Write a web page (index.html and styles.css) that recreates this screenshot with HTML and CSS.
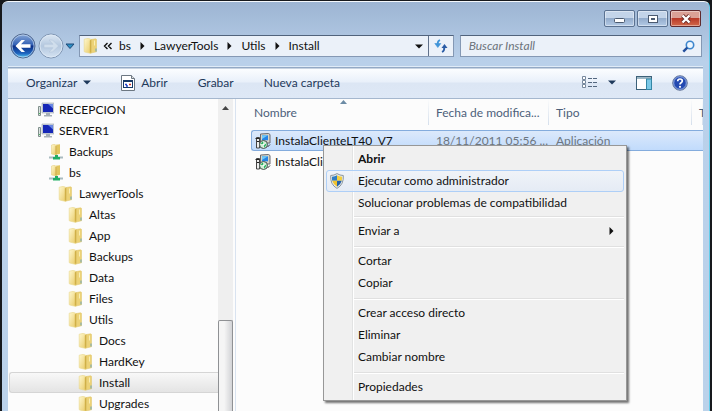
FILE: index.html
```html
<!doctype html>
<html lang="es">
  <head>
    <meta charset="utf-8">
    <meta name="viewport" content="width=device-width, initial-scale=1">
    <title>Install</title>
    <link rel="stylesheet" href="styles.css">
  </head>
  <body>
    <!-- Shared icons -->
    <svg class="defs" aria-hidden="true">
      <defs>
        <linearGradient id="gold" x1="0" x2="1" y1="0" y2="1">
          <stop offset="0" stop-color="#fff8cf"/>
          <stop offset="1" stop-color="#e8ca66"/>
        </linearGradient>
        <linearGradient id="orb" x1="0" x2="0" y1="0" y2="1">
          <stop offset="0" stop-color="#8aa9d8"/>
          <stop offset="0.45" stop-color="#3260b4"/>
          <stop offset="0.5" stop-color="#0c2f86"/>
          <stop offset="0.8" stop-color="#1d62bd"/>
          <stop offset="1" stop-color="#55d0f8"/>
        </linearGradient>
        <linearGradient id="orb-off" x1="0" x2="0" y1="0" y2="1">
          <stop offset="0" stop-color="#dce7f3"/>
          <stop offset="0.5" stop-color="#b4c8df"/>
          <stop offset="1" stop-color="#d5e3f2"/>
        </linearGradient>
        <symbol id="folder" viewBox="0 0 16 16">
          <path d="M8 1.500l4.500-.7q1 0 1 1v12l-5.500 1.200z" fill="#ecd277" stroke="#dfc364" stroke-width=".5"/>
          <path d="M1.200 1.200l4.300-.9 2.500 1.200v14l-6.300-1.500q-.5 0-.5-.8z" fill="url(#gold)" stroke="#ead68c" stroke-width=".6"/>
          <path d="M6.800 2.500l1.500-1v13.300l-1.500-.3z" fill="#d0b048"/>
          <path d="M11.500 2.500v5" stroke="#f9eeb4"/>
          <path d="M13 10.500v3" stroke="#6aa5bd"/>
        </symbol>
        <symbol id="share" viewBox="0 0 16 16">
          <path d="M8 .8l4-.5v9.500l-4 1z" fill="#e2c660"/>
          <path d="M3.500 1l2.500-.7 2.500 1v9.700l-5-1z" fill="url(#gold)" stroke="#e2ca78" stroke-width=".5"/>
          <path d="M8 2v8.500" stroke="#c9a53e"/>
          <path d="M1 13.500h14" stroke="#a9bbc0" stroke-width="2"/>
          <path d="M7 11h3v2h2v2.500H5V13h2z" fill="#21ad65"/>
        </symbol>
        <symbol id="computer" viewBox="0 0 16 16">
          <path d="M.5 4.500h2v9h-2z" fill="#dbe3e2" stroke="#81908c"/>
          <path d="M1 11.500h1" stroke="#4bb861"/>
          <path d="M4 1h12v10H4z" fill="#cfd5dc" stroke="#9ba5b2" stroke-width=".6"/>
          <path d="M5 2h10v8H5z" fill="#1627b7"/>
          <path d="M10 2h5v4.500z" fill="#6987e3"/>
          <path d="M8 11h4v2H8zM6 13h8v1.500H6z" fill="#a6afb7"/>
        </symbol>
        <symbol id="installer" viewBox="0 0 16 16">
          <path d="M5.500 1l8-.5 1.500 1v8.500H5.500z" fill="#d7d3c8" stroke="#686b72"/>
          <path d="M7 2.300h6v5H7z" fill="#2484e6"/>
          <path d="M7 2.300h6L7 6z" fill="#6fc8f7"/>
          <path d="M1.500 4.500h3v10.500h-3z" fill="#eee" stroke="#444"/>
          <path d="M.5 5.500h4M2 8.500h2" stroke="#222"/>
          <circle cx="8.500" cy="11.500" r="4" fill="#d3eed6" stroke="#444f4c"/>
          <path d="M5.500 10.500l2.500-2 .5 3zM8.500 12l3.500-1.500-2.500 4z" fill="#1fae58"/>
          <circle cx="8.500" cy="11.500" r="1" fill="#fff"/>
          <path d="M12.500 14l2.500-2.500" stroke="#333" fill="none"/>
        </symbol>
        <symbol id="arrow-right" viewBox="0 0 5 8">
          <path d="M.5 0L4.500 4l-4 4z" fill="currentColor"/>
        </symbol>
        <symbol id="arrow-down" viewBox="0 0 8 5">
          <path d="M0 .5h8L4 4.500z" fill="currentColor"/>
        </symbol>
      </defs>
    </svg>

    <div class="window">
      <header class="titlebar">
        <button class="win-btn" aria-label="Minimizar">
          <svg width="12" height="10"><rect x=".5" y="4.500" width="10" height="4" rx="1" fill="#fff" stroke="#4b5a70"/></svg>
        </button>
        <button class="win-btn" aria-label="Maximizar">
          <svg width="12" height="10"><rect x="1.500" y="1.500" width="9" height="7" fill="#fff" stroke="#4b5a70"/><rect x="4.500" y="4.500" width="3" height="1" fill="#8ca6c8" stroke="#4b5a70"/></svg>
        </button>
        <button class="win-btn close" aria-label="Cerrar">
          <svg width="12" height="10"><path d="M2.500 1.500l7 7M9.500 1.500l-7 7" stroke="#6b2a25" stroke-width="4"/><path d="M2.500 1.500l7 7M9.500 1.500l-7 7" stroke="#fff" stroke-width="2.400"/></svg>
        </button>
      </header>

      <div class="navbar">
        <div class="history">
          <button aria-label="Atrás">
            <svg width="26" height="26"><circle cx="13" cy="13" r="12" fill="url(#orb)" stroke="#53698e"/><circle cx="13" cy="13" r="11" fill="none" stroke="#c4d8f0" stroke-opacity=".7"/><path d="M5.500 13l6-6h3.500l-4 4.300h9.500v3.400H11l4 4.300h-3.500z" fill="#fff"/></svg>
          </button>
          <button aria-label="Adelante">
            <svg width="26" height="26"><circle cx="13" cy="13" r="12" fill="url(#orb-off)" stroke="#8096b3"/><circle cx="13" cy="13" r="11" fill="none" stroke="#dfeaf6" stroke-opacity=".8"/><path d="M20.500 13l-6-6H11l4 4.300H6v3.400h9L11 19h3.500z" fill="#d0deec" stroke="#b0c3d9" stroke-width=".5"/></svg>
          </button>
          <button class="recent" aria-label="Ubicaciones recientes">
            <svg width="10" height="7"><path d="M1 1h8L5 5.500z" fill="#2d8fc4" stroke="#1f4a78"/></svg>
          </button>
        </div>
        <nav class="address">
          <svg class="icon" width="16" height="16"><use href="#folder"/></svg>
          <button class="back-crumbs" aria-label="Niveles anteriores">
            <svg width="9" height="8"><path d="M4.500 1L1.500 4l3 3M8.500 1l-3 3 3 3" fill="none" stroke="#111" stroke-width="1.400"/></svg>
          </button>
          <a href="#">bs</a>
          <svg width="5" height="8"><use href="#arrow-right"/></svg>
          <a href="#">LawyerTools</a>
          <svg width="5" height="8"><use href="#arrow-right"/></svg>
          <a href="#">Utils</a>
          <svg width="5" height="8"><use href="#arrow-right"/></svg>
          <a href="#">Install</a>
          <button class="address-drop" aria-label="Ubicaciones anteriores">
            <svg width="8" height="5"><use href="#arrow-down"/></svg>
          </button>
          <button class="refresh" aria-label="Actualizar">
            <svg width="14" height="14"><path d="M.8 4.500h6L3.800 8.500z" fill="#3f94d8" stroke="#3f94d8" stroke-width=".6"/><path d="M6 1Q3.500 2 3.700 5" fill="none" stroke="#3f94d8" stroke-width="1.800"/><path d="M7.500 9h6l-3-4z" fill="#2a5ca6"/><path d="M10.300 8q.3 4-2.300 5" fill="none" stroke="#2a5ca6" stroke-width="1.800"/></svg>
          </button>
        </nav>
        <form class="search">
          <input type="text" placeholder="Buscar Install" aria-label="Buscar Install">
          <button type="button" aria-label="Buscar">
            <svg width="13" height="13"><circle cx="8" cy="5" r="3.700" fill="#eef7ff" stroke="#3d86cd" stroke-width="1.600"/><path d="M5.300 7.700L1.300 11.700" stroke="#234f9c" stroke-width="2.400"/></svg>
          </button>
        </form>
      </div>

      <div class="toolbar">
        <button>Organizar <svg width="8" height="5"><use href="#arrow-down"/></svg></button>
        <button>
          <svg width="14" height="16"><path d="M.5.5h10l3 3v12H.5z" fill="#fff" stroke="#6c7782"/><path d="M10.500.5v3h3" fill="#ddd" stroke="#6c7782"/><rect x="2.500" y="5.500" width="9" height="7" fill="#fff" stroke="#173a67"/><path d="M2 6h10" stroke="#173a67" stroke-width="2"/><path d="M4 9.500h2M5 11h2" stroke="#2949cc" stroke-width="1.500"/><path d="M8 9.500h2" stroke="#d13020" stroke-width="1.500"/></svg>
          Abrir
        </button>
        <button>Grabar</button>
        <button>Nueva carpeta</button>
        <div class="toolbar-right">
          <button class="views" aria-label="Cambiar la vista">
            <svg width="16" height="13"><path d="M.5.5h3v3h-3zM.5 4.500h3v3h-3zM.5 8.500h3v3h-3z" fill="#fff" stroke="#77889d"/><path d="M6 2.500h4M11 2.500h4M6 6.500h4M11 6.500h4M6 10.500h4M11 10.500h4" stroke="#53677f"/></svg>
            <svg width="8" height="5"><use href="#arrow-down"/></svg>
          </button>
          <button aria-label="Panel de vista previa">
            <svg width="16" height="14"><rect x=".5" y=".5" width="15" height="13" fill="#fff" stroke="#3c6179"/><path d="M1 2h14" stroke="#9db7c5" stroke-width="2"/><rect x="10.500" y="3" width="5" height="10.500" fill="#7cc9e7" stroke="#3587a6"/></svg>
          </button>
          <button aria-label="Ayuda">
            <svg width="16" height="16"><circle cx="8" cy="8" r="7.300" fill="#2349b1" stroke="#6f7f9f"/><circle cx="8" cy="8" r="6.300" fill="none" stroke="#a9c1ee" stroke-width=".8"/><path d="M5.700 6.300q0-2.300 2.300-2.300 2.300 0 2.300 2 0 1-1.200 1.700-1.100.7-1.100 1.700" fill="none" stroke="#fff" stroke-width="1.700"/><circle cx="8" cy="11.800" r="1.100" fill="#fff"/></svg>
          </button>
        </div>
      </div>

      <main class="content">
        <aside class="sidebar">
          <nav class="tree">
            <a class="level-0" href="#"><svg width="16" height="16"><use href="#computer"/></svg>RECEPCION</a>
            <a class="level-0" href="#"><svg width="16" height="16"><use href="#computer"/></svg>SERVER1</a>
            <a class="level-1" href="#"><svg width="16" height="16"><use href="#share"/></svg>Backups</a>
            <a class="level-1" href="#"><svg width="16" height="16"><use href="#share"/></svg>bs</a>
            <a class="level-2" href="#"><svg width="16" height="16"><use href="#folder"/></svg>LawyerTools</a>
            <a class="level-3" href="#"><svg width="16" height="16"><use href="#folder"/></svg>Altas</a>
            <a class="level-3" href="#"><svg width="16" height="16"><use href="#folder"/></svg>App</a>
            <a class="level-3" href="#"><svg width="16" height="16"><use href="#folder"/></svg>Backups</a>
            <a class="level-3" href="#"><svg width="16" height="16"><use href="#folder"/></svg>Data</a>
            <a class="level-3" href="#"><svg width="16" height="16"><use href="#folder"/></svg>Files</a>
            <a class="level-3" href="#"><svg width="16" height="16"><use href="#folder"/></svg>Utils</a>
            <a class="level-4" href="#"><svg width="16" height="16"><use href="#folder"/></svg>Docs</a>
            <a class="level-4" href="#"><svg width="16" height="16"><use href="#folder"/></svg>HardKey</a>
            <a class="level-4 current" href="#"><svg width="16" height="16"><use href="#folder"/></svg>Install</a>
            <a class="level-4" href="#"><svg width="16" height="16"><use href="#folder"/></svg>Upgrades</a>
          </nav>
          <div class="scrollbar">
            <svg width="7" height="4"><path d="M0 4l3.500-4L7 4z" fill="#444"/></svg>
            <div class="thumb"></div>
          </div>
        </aside>

        <section class="files">
          <table>
            <colgroup>
              <col class="col-name">
              <col class="col-date">
              <col class="col-type">
              <col>
            </colgroup>
            <thead>
              <tr>
                <th>Nombre<svg class="sort" width="7" height="4"><path d="M0 4l3.500-4L7 4z" fill="#6c8ba5"/></svg></th>
                <th>Fecha de modifica...</th>
                <th>Tipo</th>
                <th>T</th>
              </tr>
            </thead>
            <tbody>
              <tr class="selected">
                <td><span class="file"><svg width="16" height="16"><use href="#installer"/></svg>InstalaClienteLT40_V7</span></td>
                <td>18/11/2011 05:56 ...</td>
                <td>Aplicación</td>
                <td></td>
              </tr>
              <tr>
                <td><span class="file"><svg width="16" height="16"><use href="#installer"/></svg>InstalaCliente</span></td>
                <td></td>
                <td></td>
                <td></td>
              </tr>
            </tbody>
          </table>
        </section>
      </main>
    </div>

    <div class="context-menu" role="menu">
      <button role="menuitem" class="default">Abrir</button>
      <button role="menuitem" class="hover">
        <svg class="shield" width="14" height="16"><path d="M7 .6Q10 2.500 13.300 2.500 14 11.500 7 15.400 0 11.500.7 2.500 4 2.500 7 .6z" fill="#e8edf0" stroke="#8b959c"/><path d="M7 2.300v5.500H2.200Q1.800 6 2 3.700 5 3.500 7 2.300z" fill="#2f7cc2"/><path d="M7 2.300v5.500h4.800q.4-1.800.2-4.100Q9 3.500 7 2.300z" fill="#f4cf3e"/><path d="M7 7.800v5.900Q3.200 11.500 2.200 7.800z" fill="#f0c32f"/><path d="M7 7.800v5.900q3.800-2.200 4.800-5.900z" fill="#2460a8"/></svg>
        Ejecutar como administrador
      </button>
      <button role="menuitem">Solucionar problemas de compatibilidad</button>
      <hr class="tight">
      <button role="menuitem">Enviar a<svg class="submenu" width="5" height="8"><use href="#arrow-right"/></svg></button>
      <hr>
      <button role="menuitem">Cortar</button>
      <button role="menuitem">Copiar</button>
      <hr>
      <button role="menuitem">Crear acceso directo</button>
      <button role="menuitem">Eliminar</button>
      <button role="menuitem">Cambiar nombre</button>
      <hr>
      <button role="menuitem">Propiedades</button>
    </div>
  </body>
</html>
```

FILE: styles.css
```css
* {
  box-sizing: border-box;
}
body {
  margin: 0;
  height: 100vh;
  overflow: hidden;
  background: #16191d;
  font-family: Lato, "Open Sans", sans-serif;
  font-size: 12px;
  line-height: 16px;
  color: #111;
}
.defs {
  position: absolute;
  width: 0;
  height: 0;
}
svg {
  display: block;
  flex: none;
}
button {
  display: flex;
  align-items: center;
  margin: 0;
  padding: 0;
  border: 0;
  background: none;
  font: inherit;
  color: inherit;
}
a {
  color: inherit;
  text-decoration: none;
}

/* Window frame */
.window {
  display: flex;
  flex-direction: column;
  height: calc(100vh - 1px);
  margin: 1px 2px 0;
  padding: 0 6px;
  border-top: 1px solid #f4f8fc;
  border-right: 1px solid #63cdea;
  border-radius: 6px 6px 0 0;
  background: linear-gradient(#9db5d3, #b9d0ea 60px, #bbd2ea);
}
.titlebar {
  display: flex;
  justify-content: flex-end;
  gap: 2px;
  height: 33px;
  padding: 8px 2px 0 0;
}
.win-btn {
  justify-content: center;
  width: 31px;
  height: 17px;
  border: 1px solid #5b7291;
  border-radius: 2px;
  background: linear-gradient(#c3d4e9 45%, #93accc 50%, #b3cae6);
  box-shadow: inset 0 0 0 1px rgba(255, 255, 255, 0.4);
}
.win-btn.close {
  border-color: #602a2e;
  background: linear-gradient(#dba196 45%, #b93a28 50%, #d2694b);
}

/* Address and search */
.navbar {
  display: flex;
  align-items: center;
  height: 22px;
  padding-right: 1px;
}
.history {
  display: flex;
  align-items: center;
  gap: 2px;
  width: 71px;
  padding-left: 2px;
}
.recent {
  margin-left: -1px;
}
.address {
  flex: 382;
  display: flex;
  align-items: center;
  gap: 9px;
  height: 22px;
  padding-left: 3px;
  border: 1px solid #8498b4;
  border-top-color: #51637c;
  background: #ebf1f9;
}
.back-crumbs {
  margin: 0 -2px 0 -5px;
}
.address-drop {
  margin-left: auto;
}
.refresh {
  justify-content: center;
  height: 20px;
  width: 25px;
  margin-left: -4px;
  border-left: 1px solid #60718b;
}
.search {
  flex: 236;
  display: flex;
  align-items: center;
  height: 22px;
  margin-left: 6px;
  padding: 0 6px;
  border: 1px solid #8498b4;
  border-top-color: #51637c;
  background: #ebf1f9;
}
.search input {
  flex: 1;
  min-width: 0;
  padding: 0 2px;
  border: 0;
  outline: 0;
  background: none;
  font: inherit;
}
.search input::placeholder {
  font-style: italic;
  color: #6d747c;
}

/* Command bar */
.toolbar {
  display: flex;
  align-items: center;
  gap: 30px;
  height: 33px;
  flex: none;
  margin-top: 9px;
  padding: 0 15px 0 18px;
  border-top: 1px solid #dfebf7;
  border-bottom: 1px solid #a5b7ce;
  background: linear-gradient(#93a9c5 1px, #fbfdff 2px, #e9f0fa 48%, #dce6f4 52%, #dee8f6);
  color: #1e395b;
}
.toolbar button {
  gap: 6px;
}
.toolbar-right {
  display: flex;
  align-items: center;
  gap: 20px;
  margin-left: auto;
}
.toolbar .views {
  gap: 10px;
}

/* Folder tree */
.content {
  flex: 1;
  min-height: 0;
  display: flex;
  background: #fcfcfc;
}
.sidebar {
  display: flex;
  width: 228px;
  flex: none;
  border-right: 1px solid #d9e3f0;
  overflow: hidden;
}
.tree {
  flex: 1;
}
.tree a {
  display: flex;
  align-items: center;
  gap: 5px;
  height: 21px;
  margin-left: 1px;
  border: 1px solid transparent;
  border-right: 0;
}
.tree .level-0 {
  padding-left: 28px;
}
.tree .level-1 {
  padding-left: 38px;
}
.tree .level-2 {
  padding-left: 48px;
}
.tree .level-3 {
  padding-left: 58px;
}
.tree .level-4 {
  padding-left: 68px;
}
.tree .current {
  border-color: #d5d5d5;
  border-radius: 3px 0 0 3px;
  background: linear-gradient(#f8f8f8, #e4e4e4);
}
.scrollbar {
  display: flex;
  flex-direction: column;
  align-items: center;
  justify-content: space-between;
  width: 15px;
  margin-right: 2px;
  padding-top: 7px;
  background: #efefef;
}
.thumb {
  width: 15px;
  height: 30%;
  border: 1px solid #8f9194;
  border-bottom: 0;
  border-radius: 2px 2px 0 0;
  background: linear-gradient(90deg, #f5f5f5 40%, #d2d3d6);
}

/* File list */
.files {
  flex: 1;
  min-width: 0;
  padding-left: 15px;
  overflow: hidden;
}
table {
  width: 100%;
  table-layout: fixed;
  border-spacing: 0;
}
.col-name {
  width: 178px;
}
.col-date {
  width: 120px;
}
.col-type {
  width: 143px;
}
th,
td {
  padding: 0 0 0 7px;
  overflow: hidden;
  white-space: nowrap;
  text-align: left;
  font-weight: normal;
}
th {
  position: relative;
  height: 31px;
  padding-bottom: 4px;
  color: #4c607a;
  background: linear-gradient(#fcfcfc, #d5dfec) right top / 1px 26px no-repeat;
}
th:first-child {
  padding-left: 3px;
}
.sort {
  position: absolute;
  top: 1px;
  left: 50%;
}
td {
  height: 21px;
  color: #6d7680;
}
td:first-child {
  padding-left: 3px;
  border-left: 1px solid transparent;
}
.file {
  display: flex;
  align-items: center;
  gap: 4px;
  color: #111;
}
.selected td,
.selected td:first-child {
  border: 1px solid #84acdd;
  border-width: 1px 0;
  background: linear-gradient(#dce9fb, #c1dbfc);
}
.selected td:first-child {
  border-left-width: 1px;
  border-radius: 3px 0 0 3px;
}

/* Context menu */
.context-menu {
  position: absolute;
  left: 323px;
  top: 145px;
  width: 304px;
  padding: 2px;
  border: 1px solid #979797;
  background: linear-gradient(90deg, #e2e3e3 1px, #fff 1px) 28px 0 / 2px 100% no-repeat #f0f0f0;
  box-shadow: 2px 2px 2px rgba(0, 0, 0, 0.55);
}
.context-menu button {
  position: relative;
  width: 100%;
  height: 22px;
  padding-left: 31px;
  border: 1px solid transparent;
  border-radius: 3px;
}
.context-menu .default {
  font-weight: bold;
}
.context-menu .hover {
  border-color: #aecff7;
  background: linear-gradient(rgba(240, 244, 250, 0.8), rgba(226, 234, 246, 0.8));
}
.context-menu hr {
  height: 2px;
  margin: 4px 0 2px 28px;
  border: 0;
  border-top: 1px solid #e0e0e0;
  background: #fff;
}
.context-menu hr.tight {
  margin-top: 2px;
}
.shield {
  position: absolute;
  left: 3px;
}
.submenu {
  margin-left: auto;
  margin-right: 9px;
}
```
